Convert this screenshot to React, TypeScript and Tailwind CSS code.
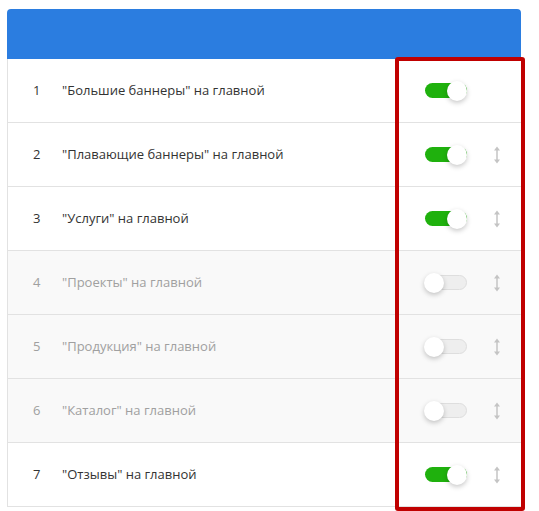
import React from "react";

type Block = { id: number; title: string; enabled: boolean; draggable: boolean };

const blocks: Block[] = [
  { id: 1, title: "\"Большие баннеры\" на главной", enabled: true, draggable: false },
  { id: 2, title: "\"Плавающие баннеры\" на главной", enabled: true, draggable: true },
  { id: 3, title: "\"Услуги\" на главной", enabled: true, draggable: true },
  { id: 4, title: "\"Проекты\" на главной", enabled: false, draggable: true },
  { id: 5, title: "\"Продукция\" на главной", enabled: false, draggable: true },
  { id: 6, title: "\"Каталог\" на главной", enabled: false, draggable: true },
  { id: 7, title: "\"Отзывы\" на главной", enabled: true, draggable: true },
];

function Toggle({ on }: { on: boolean }) {
  return (
    <div className="relative w-[42px] h-[20px] flex items-center">
      <div
        className={
          on
            ? "w-[42px] h-[15px] rounded-full bg-[#1fb10d]"
            : "w-[42px] h-[15px] rounded-full bg-[#eeeeee] border border-[#dedede]"
        }
      />
      <div
        className={
          "absolute top-0 w-[20px] h-[20px] rounded-full bg-white shadow-[0_2px_5px_rgba(0,0,0,0.22)] " +
          (on ? "left-[22px]" : "left-[-1px]")
        }
      />
    </div>
  );
}

function DragHandle() {
  return (
    <svg width="8" height="20" viewBox="0 0 8 20" fill="none">
      <path d="M4 3v14" stroke="#c4c4c4" strokeWidth="1.5" />
      <path d="M1 5.5 4 1.5 7 5.5Z" fill="#c4c4c4" />
      <path d="M1 14.5 4 18.5 7 14.5Z" fill="#c4c4c4" />
    </svg>
  );
}

export default function App() {
  return (
    <div className="relative w-[539px] h-[511px] overflow-hidden bg-white font-['Open_Sans',sans-serif]">
      <div className="ml-[7px] mt-[9px] w-[514px]">
        <div className="h-[50px] bg-[#2b7de0] rounded-t-[4px]" />
        {blocks.map((b) => (
          <div
            key={b.id}
            className={
              "h-[64px] flex items-center border-l border-b border-[#e2e2e2] text-[13px] " +
              (b.enabled ? "bg-white text-[#333333]" : "bg-[#f9f9f9] text-[#a0a0a0]")
            }
          >
            <div className="w-[29px] ml-[25px]">{b.id}</div>
            <div className="flex-1">{b.title}</div>
            <Toggle on={b.enabled} />
            <div className="w-[8px] ml-[26px] mr-[20px] flex">
              {b.draggable && <DragHandle />}
            </div>
          </div>
        ))}
      </div>
      {/* highlight frame around the switches column */}
      <div className="absolute left-[395px] top-[57px] w-[130px] h-[454px] border-4 border-[#c00000] rounded-[3px]" />
    </div>
  );
}
